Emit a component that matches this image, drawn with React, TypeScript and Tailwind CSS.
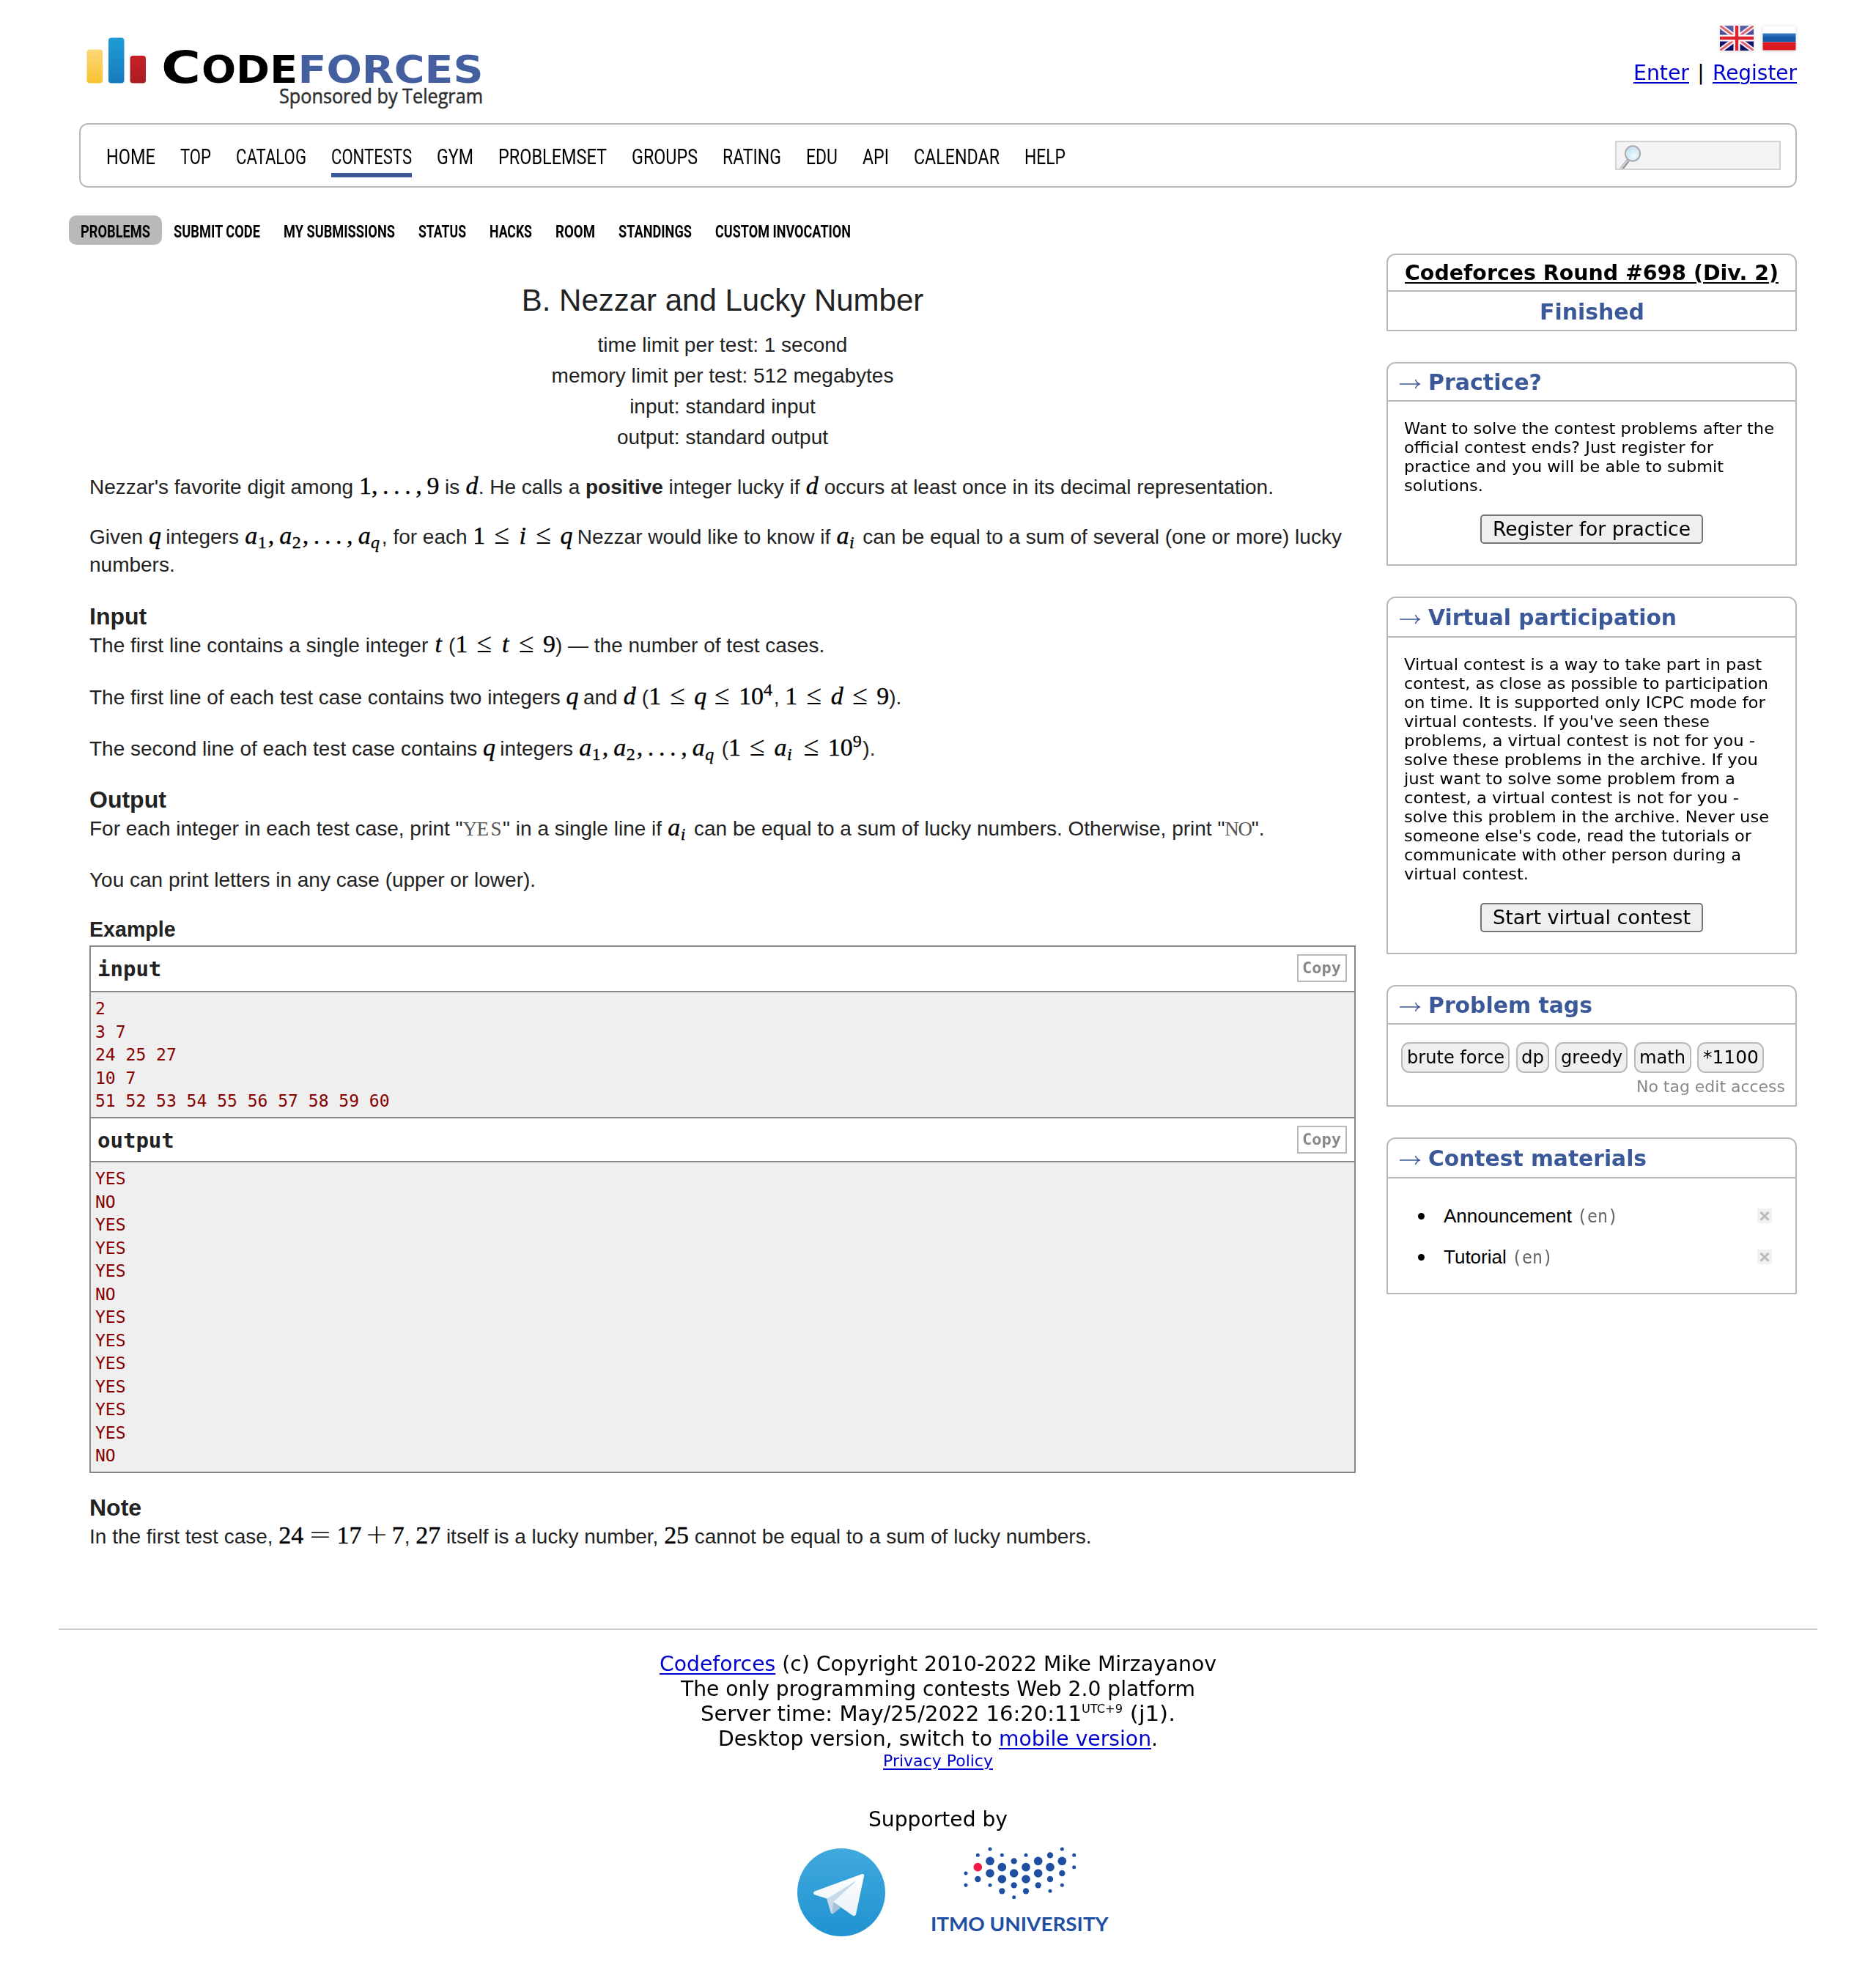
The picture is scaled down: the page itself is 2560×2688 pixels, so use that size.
import { useLayoutEffect, useRef, useState, type ReactNode } from "react";

/* Text squeezed or stretched horizontally so that it fills exactly `w` pixels. */
function Fit({ w, className = "", children }: { w: number; className?: string; children: ReactNode }) {
  const ref = useRef<HTMLSpanElement>(null);
  const [scale, setScale] = useState(1);
  useLayoutEffect(() => {
    if (ref.current) setScale(w / parseFloat(getComputedStyle(ref.current).width));
  }, [w]);
  return (
    <span className="inline-block whitespace-nowrap text-left" style={{ width: w }}>
      <span ref={ref} className={`inline-block origin-left ${className}`} style={{ transform: `scaleX(${scale})` }}>
        {children}
      </span>
    </span>
  );
}

/* ---------- math ---------- */

type Tok = [text: string, width: number, kind?: "i" | "rel" | "sub" | "subi" | "sup" | "left"];

const kinds: Record<string, string> = {
  n: "text-center",
  left: "text-left",
  i: "text-center italic",
  rel: "text-center font-['DejaVu_Sans'] font-extralight text-[38px] leading-[30px] [-webkit-text-stroke:0px]",
  sub: "text-left text-[24px] relative top-[6px]",
  subi: "text-left text-[24px] italic relative top-[6px]",
  sup: "text-left text-[24px] relative -top-[12px]",
};

function M({ t }: { t: Tok[] }) {
  return (
    <span className="whitespace-nowrap font-['Liberation_Serif',serif] text-[34px] leading-none text-black [-webkit-text-stroke:0.35px_#000]">
      {t.map(([s, w, k], i) => (
        <span key={i} className={`inline-block ${k === "rel" ? "" : "leading-none"} ${kinds[k ?? "n"]}`} style={{ width: w * 33.9 }}>
          {s}
        </span>
      ))}
    </span>
  );
}

const LE: Tok = ["≤", 1.334, "rel"];
const COMMA: Tok = [",", 0.445, "left"];
const DOTS: Tok[] = [[".", 0.446, "left"], [".", 0.446, "left"], [".", 0.446, "left"]];
const D: Tok[] = [["d", 0.52, "i"]];
const Q: Tok[] = [["q", 0.46, "i"]];
const AI: Tok[] = [["a", 0.529, "i"], ["i", 0.31, "subi"]];
const ALIST: Tok[] = [
  ["a", 0.529, "i"], ["1", 0.414, "sub"], COMMA,
  ["a", 0.529, "i"], ["2", 0.414, "sub"], COMMA,
  ...DOTS, COMMA,
  ["a", 0.529, "i"], ["q", 0.435, "subi"],
];
const TEN: Tok[] = [["1", 0.5], ["0", 0.5]];

function Tt({ children }: { children: string }) {
  return (
    <span className="font-['Liberation_Serif',serif] text-[27px] leading-none text-[#555]">
      {children.split("").map((c, i) => (
        <span key={i} className="inline-block w-[18.2px] text-center leading-none">{c}</span>
      ))}
    </span>
  );
}

/* ---------- header ---------- */

function Logo() {
  return (
    <svg className="mt-12 overflow-visible" width="560" height="100" viewBox="108 48 560 100">
      <defs>
        <linearGradient id="ly" x1="0" y1="0" x2="0" y2="1"><stop offset="0" stopColor="#fbd778" /><stop offset="1" stopColor="#f9c22e" /></linearGradient>
        <linearGradient id="lb" x1="0" y1="0" x2="0" y2="1"><stop offset="0" stopColor="#1f9cd8" /><stop offset="1" stopColor="#177bbd" /></linearGradient>
        <linearGradient id="lr" x1="0" y1="0" x2="0" y2="1"><stop offset="0" stopColor="#c92127" /><stop offset="1" stopColor="#a81d23" /></linearGradient>
      </defs>
      <rect x="118.5" y="67.5" width="21.5" height="46" rx="4" fill="url(#ly)" />
      <rect x="148" y="51.5" width="21.5" height="62" rx="4" fill="url(#lb)" />
      <rect x="177.5" y="76" width="21.5" height="37.5" rx="4" fill="url(#lr)" />
      <g fontFamily="'DejaVu Sans'" fontWeight="bold">
        <text x="220" y="113" fontSize="60" textLength="54" lengthAdjust="spacingAndGlyphs">C</text>
        <text x="275" y="113" fontSize="51" textLength="131" lengthAdjust="spacingAndGlyphs">ODE</text>
        <text x="406.5" y="113" fontSize="51" textLength="253" lengthAdjust="spacingAndGlyphs" fill="#445fa0">FORCES</text>
      </g>
      <text x="381" y="140.5" fontSize="26.5" fontFamily="'Open Sans'" fill="#2e2e2e" stroke="#2e2e2e" strokeWidth=".5" textLength="278" lengthAdjust="spacingAndGlyphs">Sponsored by Telegram</text>
    </svg>
  );
}

function FlagGb() {
  return (
    <svg width="46" height="34" viewBox="0 0 46 34" className="drop-shadow-sm">
      <defs>
        <linearGradient id="gb" x1="0" y1="0" x2="0" y2="1"><stop offset="0" stopColor="#6464a8" /><stop offset=".5" stopColor="#3c3c8c" /><stop offset=".55" stopColor="#14146e" /><stop offset="1" stopColor="#0c0c60" /></linearGradient>
        <clipPath id="gbc"><rect width="46" height="34" rx="1" /></clipPath>
      </defs>
      <g clipPath="url(#gbc)">
        <rect width="46" height="34" fill="url(#gb)" />
        <path d="M0 0L46 34M46 0L0 34" stroke="#f4eef2" strokeWidth="7" />
        <path d="M0 0L46 34M46 0L0 34" stroke="#e0606c" strokeWidth="2.8" />
        <path d="M23 0V34M0 17H46" stroke="#fff" strokeWidth="9" />
        <path d="M23 0V34M0 17H46" stroke="#dd2430" strokeWidth="4.4" />
      </g>
    </svg>
  );
}

function FlagRu() {
  return (
    <svg width="46" height="34" viewBox="0 0 46 34" className="drop-shadow-sm">
      <defs>
        <linearGradient id="ru" x1="0" y1="0" x2="0" y2="1"><stop offset="0" stopColor="#4080c0" /><stop offset=".5" stopColor="#1458a8" /><stop offset="1" stopColor="#1458a8" /></linearGradient>
      </defs>
      <rect width="46" height="34" rx="1" fill="#fdfdfd" stroke="#e8e8e8" strokeWidth=".8" />
      <rect x=".5" y="10.5" width="45" height="12" fill="url(#ru)" />
      <rect x=".5" y="22.5" width="45" height="11" fill="#dd1a22" />
    </svg>
  );
}

function Magnifier() {
  return (
    <svg className="ml-[2px] mt-[3px]" width="32" height="33" viewBox="0 0 32 33">
      <defs>
        <radialGradient id="mg" cx=".6" cy=".65" r=".7"><stop offset="0" stopColor="#f2fbff" /><stop offset="1" stopColor="#b8dcf2" /></radialGradient>
      </defs>
      <path d="M13.5 22L4.5 34" stroke="#9a9aa2" strokeWidth="5" />
      <path d="M12.6 22L3.8 33" stroke="#dcdce2" strokeWidth="1.8" />
      <ellipse cx="20" cy="12.5" rx="10" ry="10.2" fill="url(#mg)" stroke="#a8aab2" strokeWidth="2.2" />
      <ellipse cx="20" cy="12.5" rx="8.4" ry="8.6" fill="none" stroke="#e4eef4" strokeWidth="1" />
    </svg>
  );
}

const NAV: [string, number][] = [
  ["HOME", 67], ["TOP", 42], ["CATALOG", 96], ["CONTESTS", 110], ["GYM", 50], ["PROBLEMSET", 148],
  ["GROUPS", 90], ["RATING", 80], ["EDU", 43], ["API", 36], ["CALENDAR", 117], ["HELP", 56],
];
const SUBNAV: [string, number][] = [
  ["PROBLEMS", 95], ["SUBMIT CODE", 118], ["MY SUBMISSIONS", 152], ["STATUS", 65],
  ["HACKS", 58], ["ROOM", 54], ["STANDINGS", 100], ["CUSTOM INVOCATION", 185],
];

const LINK = "text-[#0000cc] underline decoration-2 underline-offset-[3px]";

function Header() {
  return (
    <>
      <div className="flex h-[168px] justify-between pl-[108px] pr-[108px]">
        <Logo />
        <div className="flex flex-col items-end pt-[35px]">
          <div className="mr-px flex gap-[12px]">
            <FlagGb />
            <FlagRu />
          </div>
          <div className="mt-[14px] flex leading-[34px]">
            <Fit w={76} className={LINK}>Enter</Fit>
            <span className="w-8 text-center">|</span>
            <Fit w={115} className={LINK}>Register</Fit>
          </div>
        </div>
      </div>
      <nav className="mx-[108px] flex h-[88px] items-start justify-between rounded-[12px] border-2 border-[#b9b9b9] pl-[35px] pr-5">
        <ul className="flex gap-[34px] pt-[27px] font-['Roboto',sans-serif] text-[29px] leading-[34px]">
          {NAV.map(([s, w]) => (
            <li key={s} className={`border-b-[6px] pb-[5px] ${s === "CONTESTS" ? "border-[#3b5998]" : "border-transparent"}`}>
              <Fit w={w}>{s}</Fit>
            </li>
          ))}
        </ul>
        <div className="mt-[22px] h-10 w-[226px] overflow-hidden border-2 border-[#d3d3d3] bg-[#f3f3f3]">
          <Magnifier />
        </div>
      </nav>
      <ul className="mt-[38px] flex h-10 pl-[94px] font-['Roboto',sans-serif] text-[23.5px] font-bold leading-[36px]">
        {SUBNAV.map(([s, w], i) => (
          <li key={s} className={`h-10 rounded-[10px] px-4 pt-1 ${i === 0 ? "bg-[#b9b9b9]" : ""}`}>
            <Fit w={w}>{s}</Fit>
          </li>
        ))}
      </ul>
    </>
  );
}

/* ---------- statement ---------- */

const H = "text-[32px] font-bold leading-[38px]";

function SampleTitle({ name, className }: { name: string; className: string }) {
  return (
    <div className={`flex justify-between border-b-2 border-[#888] pl-[9px] pr-[10px] pt-[10px] ${className}`}>
      <span className="font-['DejaVu_Sans_Mono',monospace] text-[29px] font-bold leading-[40px]">{name}</span>
      <span className="flex h-[38px] w-[68px] items-center justify-center border-2 border-[#b9b9b9] pr-px font-['DejaVu_Sans_Mono',monospace] text-[21px] font-bold text-[#888]">
        <Fit w={53}>Copy</Fit>
      </span>
    </div>
  );
}

const PRE = "bg-[#efefef] pl-[6px] pt-[7px] font-['DejaVu_Sans_Mono',monospace] text-[23px] leading-[31.5px] text-[#880000]";

function Statement() {
  return (
    <main className="w-[1728px] pt-[39px] font-['Liberation_Sans',Arial,sans-serif] text-[28px] leading-[38px] text-[#222]">
      <div className="text-center leading-[42px]">
        <h1 className="text-[42px] leading-[50px]">B. Nezzar and Lucky Number</h1>
        <div className="mt-[15px]">time limit per test: 1 second</div>
        <div>memory limit per test: 512 megabytes</div>
        <div>input: standard input</div>
        <div>output: standard output</div>
      </div>

      <p className="mt-7 h-[38px] whitespace-nowrap">
        Nezzar's favorite digit among <M t={[["1", 0.5], COMMA, ...DOTS, COMMA, ["9", 0.5]]} /> is <M t={D} />. He calls a{" "}
        <b>positive</b> integer lucky if <M t={D} /> occurs at least once in its decimal representation.
      </p>
      <p className="mt-[30px] h-[38px] whitespace-nowrap">
        Given <M t={Q} /> integers <M t={ALIST} />, for each <M t={[["1", 0.5], LE, ["i", 0.345, "i"], LE, ...Q]} /> Nezzar would
        like to know if <M t={AI} /> can be equal to a sum of several (one or more) lucky
      </p>
      <p className="h-[38px]">numbers.</p>

      <h2 className={`mt-8 ${H}`}>Input</h2>
      <p className="mt-[2px] h-[38px] whitespace-nowrap">
        The first line contains a single integer <M t={[["t", 0.361, "i"]]} /> (
        <M t={[["1", 0.5], LE, ["t", 0.361, "i"], LE, ["9", 0.5]]} />) — the number of test cases.
      </p>
      <p className="mt-[33px] h-[38px] whitespace-nowrap">
        The first line of each test case contains two integers <M t={Q} /> and <M t={D} /> (
        <M t={[["1", 0.5], LE, ...Q, LE, ...TEN, ["4", 0.404, "sup"]]} />, <M t={[["1", 0.5], LE, ...D, LE, ["9", 0.5]]} />).
      </p>
      <p className="mt-8 h-[38px] whitespace-nowrap">
        The second line of each test case contains <M t={Q} /> integers <M t={ALIST} /> (
        <M t={[["1", 0.5], LE, ...AI, LE, ...TEN, ["9", 0.404, "sup"]]} />).
      </p>

      <h2 className={`mt-[31px] ${H}`}>Output</h2>
      <p className="mt-[2px] h-[38px] whitespace-nowrap">
        For each integer in each test case, print "<Tt>YES</Tt>" in a single line if <M t={AI} /> can be equal to a sum of lucky
        numbers. Otherwise, print "<Tt>NO</Tt>".
      </p>
      <p className="mt-8 h-[38px]">You can print letters in any case (upper or lower).</p>

      <h3 className="mt-[29px] text-[28.6px] font-bold leading-[38px]">Example</h3>
      <div className="mt-[3px] border-2 border-[#888]">
        <SampleTitle name="input" className="h-[62px]" />
        <pre className={`h-[170px] ${PRE}`}>{"2\n3 7\n24 25 27\n10 7\n51 52 53 54 55 56 57 58 59 60"}</pre>
        <div className="border-t-2 border-[#888]">
          <SampleTitle name="output" className="h-[60px]" />
        </div>
        <pre className={`h-[422px] ${PRE}`}>{"YES\nNO\nYES\nYES\nYES\nNO\nYES\nYES\nYES\nYES\nYES\nYES\nNO"}</pre>
      </div>

      <h2 className={`mt-7 ${H}`}>Note</h2>
      <p className="mt-[2px] h-[38px] whitespace-nowrap">
        In the first test case,{" "}
        <M t={[["2", 0.5], ["4", 0.5], ["=", 1.334, "rel"], ["1", 0.5], ["7", 0.5], ["+", 1.222, "rel"], ["7", 0.5]]} />,{" "}
        <M t={[["2", 0.5], ["7", 0.5]]} /> itself is a lucky number, <M t={[["2", 0.5], ["5", 0.5]]} /> cannot be equal to a sum
        of lucky numbers.
      </p>
    </main>
  );
}

/* ---------- sidebar ---------- */

function Box({ title, w, head, className, children }: { title: string; w: number; head: string; className: string; children: ReactNode }) {
  return (
    <section className={`rounded-t-[12px] border-2 border-[#b9b9b9] ${className}`}>
      <div className={`flex items-center border-b-2 border-[#b9b9b9] pl-[16px] text-[30px] text-[#3b5998] ${head}`}>
        <svg className="mr-[11px] mt-[6px]" width="28" height="14" viewBox="0 0 28 14" fill="none" stroke="#3b5998" strokeWidth="1.5">
          <path d="M0 7H27M21.5 1Q23 5.5 27.5 7Q23 8.5 21.5 13" />
        </svg>
        <Fit w={w} className="font-bold">{title}</Fit>
      </div>
      {children}
    </section>
  );
}

function Lines({ lines }: { lines: [string, number][] }) {
  return (
    <div className="flex flex-col pl-[22px] pt-6 text-[22px] leading-[26px]">
      {lines.map(([s, w], i) => (
        <div key={i} className="h-[26px]"><Fit w={w}>{s}</Fit></div>
      ))}
    </div>
  );
}

function Btn({ children }: { children: string }) {
  return (
    <button className="mx-auto mt-[26px] flex h-10 w-[304px] items-center justify-center rounded-[5px] border-2 border-[#767676] bg-[#efefef] text-[27px]">
      <Fit w={270}>{children}</Fit>
    </button>
  );
}

const TAGS: [string, number, string][] = [
  ["brute force", 133, "w-[148px]"], ["dp", 31, "w-[45px]"], ["greedy", 84, "w-[99px]"], ["math", 63, "w-[78px]"], ["*1100", 76, "w-[91px]"],
];

function Material({ name }: { name: string }) {
  return (
    <li className="flex h-14 items-center pl-[41px] pr-8">
      <span className="h-[9px] w-[9px] rounded-full bg-black" />
      <span className="ml-[26px] font-['Liberation_Sans',Arial,sans-serif] text-[26px]">{name}</span>
      <span className="ml-[7px] font-['DejaVu_Sans_Mono',monospace] text-[#666]">
        <Fit w={56} className="text-[24px]">(en)</Fit>
      </span>
      <svg className="ml-auto" width="20" height="20" viewBox="0 0 20 20">
        <rect width="20" height="20" fill="#f0f0f0" />
        <path d="M4.5 5L15.5 15.5M15.5 5L4.5 15.5" stroke="#b8b8b8" strokeWidth="3" />
      </svg>
    </li>
  );
}

function Sidebar() {
  return (
    <aside className="flex w-[560px] flex-col gap-[42px]">
      <section className="h-[106px] rounded-t-[12px] border-2 border-[#b9b9b9] text-center font-bold">
        <div className="h-[50px] border-b-2 border-[#b9b9b9] leading-[49px]">
          <Fit w={510} className="underline decoration-2 underline-offset-[3px]">Codeforces Round #698 (Div. 2)</Fit>
        </div>
        <div className="pt-[3px] text-[30px] leading-[50px] text-[#3b5998]">
          <Fit w={143}>Finished</Fit>
        </div>
      </section>

      <Box title="Practice?" w={155} head="h-[52px]" className="h-[278px]">
        <Lines
          lines={[
            ["Want to solve the contest problems after the", 505],
            ["official contest ends? Just register for", 422],
            ["practice and you will be able to submit", 436],
            ["solutions.", 108],
          ]}
        />
        <Btn>Register for practice</Btn>
      </Box>

      <Box title="Virtual participation" w={339} head="h-[54px]" className="h-[488px]">
        <Lines
          lines={[
            ["Virtual contest is a way to take part in past", 488],
            ["contest, as close as possible to participation", 497],
            ["on time. It is supported only ICPC mode for", 493],
            ["virtual contests. If you've seen these", 417],
            ["problems, a virtual contest is not for you -", 479],
            ["solve these problems in the archive. If you", 483],
            ["just want to solve some problem from a", 452],
            ["contest, a virtual contest is not for you -", 457],
            ["solve this problem in the archive. Never use", 498],
            ["someone else's code, read the tutorials or", 474],
            ["communicate with other person during a", 460],
            ["virtual contest.", 170],
          ]}
        />
        <Btn>Start virtual contest</Btn>
      </Box>

      <Box title="Problem tags" w={224} head="h-[52px]" className="h-[166px]">
        <div className="flex gap-[8.5px] pl-[18px] pt-6">
          {TAGS.map(([s, w, c]) => (
            <span key={s} className={`flex h-[42px] items-center justify-center rounded-[11px] border-2 border-[#b9b9b9] bg-[#efefef] text-[24px] ${c}`}>
              <Fit w={w}>{s}</Fit>
            </span>
          ))}
        </div>
        <div className="mt-[6px] pr-[14px] text-right text-[22px] leading-[26px] text-[#888]">
          <Fit w={203}>No tag edit access</Fit>
        </div>
      </Box>

      <Box title="Contest materials" w={298} head="h-[54px]" className="h-[214px]">
        <ul className="pt-[23px]">
          <Material name="Announcement" />
          <Material name="Tutorial" />
        </ul>
      </Box>
    </aside>
  );
}

/* ---------- footer ---------- */

function Telegram() {
  return (
    <svg width="120" height="120" viewBox="84 66 360 360">
      <defs>
        <linearGradient id="tg" x1="0" y1="0" x2="0" y2="1"><stop offset="0" stopColor="#41a9de" /><stop offset="1" stopColor="#1f93d0" /></linearGradient>
        <linearGradient id="tp" x1="0" y1="0" x2="0" y2="1"><stop offset="0" stopColor="#fff" /><stop offset="1" stopColor="#e9f2f8" /></linearGradient>
      </defs>
      <circle cx="264" cy="246" r="180" fill="url(#tg)" />
      <path d="M204 270L324 196L234 288L230 333Q223 336 220 326Z" fill="#c8daea" />
      <path d="M232 286L262 308L233 332Q228 336 227 330Z" fill="#a3c2da" />
      <path d="M154 242L349 171Q359 169 357 180L324 336Q320 347 311 341L232 286L322 200L206 272L155 256Q145 249 154 242Z" fill="url(#tp)" />
    </svg>
  );
}

const SMALL = [[873, 69], [1168, 69], [823, 94], [922, 94], [1020, 94], [1217, 94], [1217, 143], [774, 168], [774, 217], [873, 217], [1168, 217], [1119, 241], [971, 266]];
const MEDIUM = [[971, 118], [1119, 94], [823, 192], [1168, 168], [1119, 192], [971, 217], [1070, 217], [922, 241], [1020, 241]];
const LARGE = [[873, 118], [1070, 118], [1168, 118], [922, 143], [1020, 143], [1119, 143], [873, 168], [971, 168], [1070, 168], [922, 192], [1020, 192]];

function Itmo() {
  const dots = (list: number[][], r: number) => list.map(([x, y]) => <circle key={`${x}-${y}`} cx={x} cy={y} r={r} />);
  return (
    <svg width="240" height="120" viewBox="636 60 720 360" fill="#1f4fa3" className="overflow-visible">
      {dots(SMALL, 7.5)}
      {dots(MEDIUM, 12.5)}
      {dots(LARGE, 17.5)}
      <circle cx="823" cy="143" r="17.5" fill="#ee1c46" />
      <text x="630" y="405" fontSize="82" fontFamily="Lato" fontWeight="bold" textLength="728" lengthAdjust="spacingAndGlyphs">ITMO UNIVERSITY</text>
    </svg>
  );
}

function Footer() {
  return (
    <footer className="mx-20 border-t-2 border-[#ccc] pt-[30px] text-center leading-[34px]">
      <div className="flex h-[34px] justify-center">
        <Fit w={760}><a className={LINK}>Codeforces</a> (c) Copyright 2010-2022 Mike Mirzayanov</Fit>
      </div>
      <div className="flex h-[34px] justify-center"><Fit w={702}>The only programming contests Web 2.0 platform</Fit></div>
      <div className="flex h-[34px] justify-center">
        <Fit w={520}>Server time: May/25/2022 16:20:11</Fit>
        <span className="-mt-[7px] text-[16px]"><Fit w={56}>UTC+9</Fit></span>
        <Fit w={72}>&nbsp;(j1).</Fit>
      </div>
      <div className="flex h-[34px] justify-center">
        <Fit w={600}>Desktop version, switch to <a className={LINK}>mobile version</a>.</Fit>
      </div>
      <div className="flex h-[27px] justify-center text-[22px] leading-[25px]"><Fit w={150} className={LINK}>Privacy Policy</Fit></div>
      <div className="mt-[49px] flex h-[34px] justify-center"><Fit w={190}>Supported by</Fit></div>
      <div className="flex gap-16 pl-[1008px] pt-[20px]">
        <div className="pt-[2px]"><Telegram /></div>
        <Itmo />
      </div>
    </footer>
  );
}

export default function App() {
  return (
    <div className="h-[2688px] w-[2560px] overflow-hidden bg-white font-['DejaVu_Sans',Verdana,sans-serif] text-[28px] text-black">
      <Header />
      <div className="mt-3 flex h-[1876px] gap-[42px] pl-[122px]">
        <Statement />
        <Sidebar />
      </div>
      <Footer />
    </div>
  );
}
